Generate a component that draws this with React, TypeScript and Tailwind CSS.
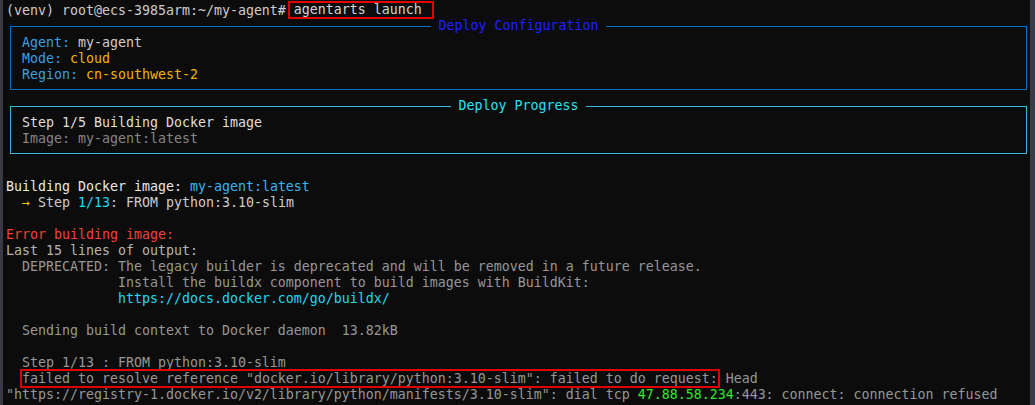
import type { ReactNode } from 'react';

type Seg = { t: string; c: string };

const GRAY = 'text-[#979797]';
const LIGHT = 'text-[#cccccc]';

// one terminal row, 16px tall, monospace grid of 8px cells
function Row({ children }: { children?: ReactNode }) {
  return <div className="h-[16px] whitespace-pre leading-[16px]">{children}</div>;
}

function Segs({ segs }: { segs: Seg[] }) {
  return (
    <>
      {segs.map((s, i) => (
        <span key={i} className={s.c}>
          {s.t}
        </span>
      ))}
    </>
  );
}

function Panel({
  title,
  border,
  titleColor,
  children,
}: {
  title: string;
  border: string;
  titleColor: string;
  children: ReactNode;
}) {
  return (
    <fieldset className={`ml-[4px] mb-[9px] w-[1017px] border p-0 ${border}`}>
      <legend className={`mx-auto px-[8px] leading-[14px] whitespace-pre ${titleColor}`}>{title}</legend>
      <div className="pl-[11px] pt-[2px] pb-[6px]">{children}</div>
    </fieldset>
  );
}

const log: Seg[][] = [
  [],
  [
    { t: 'Building Docker image: ', c: 'text-[#e8e8e8]' },
    { t: 'my-agent:latest', c: 'text-[#3ab4ec]' },
  ],
  [
    { t: '  ', c: LIGHT },
    { t: '→', c: 'text-[#f5c400]' },
    { t: ' Step ', c: LIGHT },
    { t: '1/13', c: 'text-[#22d5f0]' },
    { t: ': FROM python:3.10-slim', c: LIGHT },
  ],
  [],
  [{ t: 'Error building image:', c: 'text-[#f0443a]' }],
  [{ t: 'Last 15 lines of output:', c: 'text-[#b4b4b4]' }],
  [{ t: '  DEPRECATED: The legacy builder is deprecated and will be removed in a future release.', c: GRAY }],
  [{ t: '              Install the buildx component to build images with BuildKit:', c: GRAY }],
  [
    { t: '              ', c: GRAY },
    { t: 'https://docs.docker.com/go/buildx/', c: 'text-[#22d8f0]' },
  ],
  [],
  [{ t: '  Sending build context to Docker daemon  13.82kB', c: GRAY }],
  [],
  [{ t: '  Step 1/13 : FROM python:3.10-slim', c: GRAY }],
];

export default function App() {
  return (
    <div className="flex h-[405px] w-[1035px] overflow-hidden bg-[#0c0c0c] font-['DejaVu_Sans_Mono',monospace] text-[13.29px]">
      {/* left edge */}
      <div className="w-[3px] shrink-0 bg-[#3a3a46]" />

      {/* terminal */}
      <div className="flex-1 pl-[3px] pt-[3px]">
        <Row>
          <span className={LIGHT}>(venv) root@ecs-3985arm:~/my-agent# </span>
          <span className="-mt-[2px] -ml-[6px] inline-block h-[18px] border-2 border-[#e00000] pl-[4px] pr-[10px] align-top leading-[14px] text-[#d4d4d4]">
            agentarts launch
          </span>
        </Row>

        <Panel title="Deploy Configuration" border="border-[#0a6fc2]" titleColor="text-[#2020ff]">
          <Row>
            <span className="text-[#3b9fe0]">Agent:</span>
            <span className={LIGHT}> my-agent</span>
          </Row>
          <Row>
            <span className="text-[#3b9fe0]">Mode:</span>
            <span className="text-[#f0b400]"> cloud</span>
          </Row>
          <Row>
            <span className="text-[#3b9fe0]">Region:</span>
            <span className="text-[#f0b400]"> cn-southwest-2</span>
          </Row>
        </Panel>

        <Panel title="Deploy Progress" border="border-[#3fb6dc]" titleColor="text-[#2de2f0]">
          <Row>
            <span className="text-[#dedede]">Step 1/5 Building Docker image</span>
          </Row>
          <Row>
            <span className="text-[#858585]">Image: my-agent:latest</span>
          </Row>
        </Panel>

        {log.map((segs, i) => (
          <Row key={i}>
            <Segs segs={segs} />
          </Row>
        ))}

        <Row>
          <span className={GRAY}>  </span>
          <span className="-mt-[2px] -ml-[2px] -mr-[2px] inline-block h-[19px] border-2 border-[#e00000] align-top leading-[15px] text-[#979797]">
            failed to resolve reference "docker.io/library/python:3.10-slim": failed to do request:
          </span>
          <span className={GRAY}> Head</span>
        </Row>
        <Row>
          <span className={GRAY}>"https://registry-1.docker.io/v2/library/python/manifests/3.10-slim": dial tcp </span>
          <span className="text-[#2ee82e]">47.88.58.234</span>
          <span className={GRAY}>:443: connect: connection refused</span>
        </Row>
        <Row />
      </div>

      {/* scrollbar */}
      <div className="w-[5px] shrink-0 bg-[#3a3a48]" />
    </div>
  );
}
